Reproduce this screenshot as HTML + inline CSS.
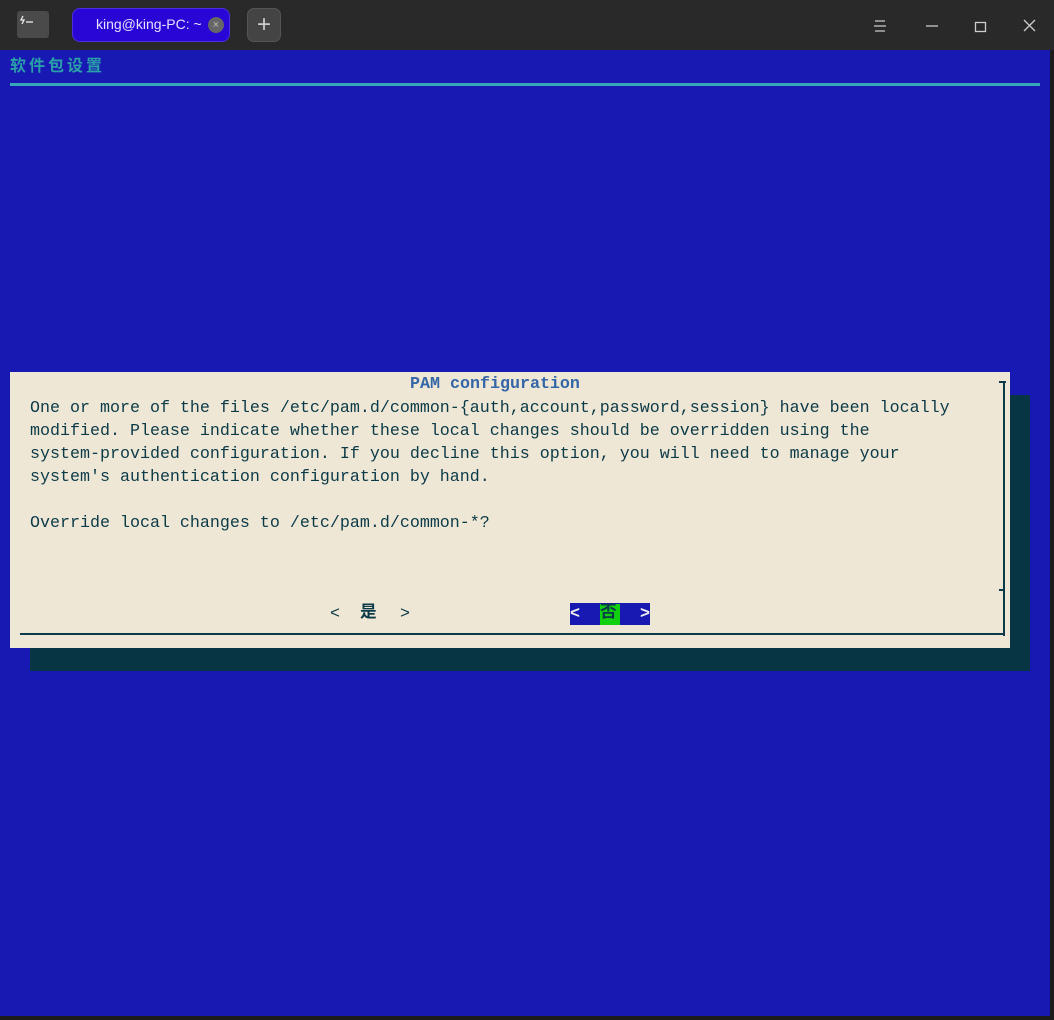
<!DOCTYPE html>
<html><head><meta charset="utf-8"><style>
*{margin:0;padding:0;box-sizing:border-box}
body{width:1054px;height:1020px;background:#1c1c1c;position:relative;overflow:hidden;font-family:"Liberation Mono","Noto Sans CJK SC",monospace}
.abs{position:absolute}
.t{position:absolute;left:30px;font-size:16.67px;color:#0b3a48;white-space:pre;line-height:20px}
</style></head><body>
<div class="abs" style="left:0;top:0;width:1054px;height:50px;background:#292929"></div>
<div class="abs" style="left:17px;top:11px;width:32px;height:27px;background:#4a4a4a;border-radius:3px"></div>
<svg class="abs" style="left:17px;top:11px" width="32" height="27" fill="none" stroke="#eee" stroke-width="1.3"><path d="M6 5l-2 4h3l-2 4"/><path d="M9 11h7"/></svg>
<div class="abs" style="left:72px;top:8px;width:158px;height:34px;background:#2a06d6;border:1px solid #4a30e0;border-radius:8px"></div>
<div class="abs" style="left:96px;top:16px;color:#e8e0ff;font-family:'Liberation Sans',sans-serif;font-size:14px">king@king-PC: ~</div>
<div class="abs" style="left:208px;top:17px;width:16px;height:16px;border-radius:50%;background:#666;color:#bbb;font-size:11px;text-align:center;line-height:16px;font-family:'Liberation Sans',sans-serif">×</div>
<div class="abs" style="left:247px;top:8px;width:34px;height:34px;background:#444;border:1px solid #555;border-radius:7px;color:#ccc;font-size:24px;text-align:center;line-height:31px;font-family:'Liberation Sans',sans-serif">+</div>
<svg class="abs" style="left:860px;top:10px" width="190" height="32" stroke="#ccc" stroke-width="1.3" fill="none">
<path d="M15 11h10M14 16h12M15 21h10"/>
<path d="M66 16h12"/>
<rect x="115.5" y="12.5" width="10" height="9"/>
<path d="M164 10l11 11M175 10l-11 11"/>
</svg>
<div class="abs" style="left:0;top:50px;width:1050px;height:966px;background:#1818b2"></div>
<div class="abs" style="left:10px;top:52px;font-family:'Noto Sans CJK SC',sans-serif;font-weight:bold;font-size:16px;color:#2aa0a8;letter-spacing:3px">软件包设置</div>
<div class="abs" style="left:10px;top:83px;width:1030px;height:3px;background:#38a8b8"></div>
<div class="abs" style="left:30px;top:395px;width:1000px;height:276px;background:#083543"></div>
<div class="abs" style="left:10px;top:372px;width:1000px;height:276px;background:#efe7d5"></div>
<div class="abs" style="left:999px;top:381px;width:7px;height:2px;background:#0b3a48"></div>
<div class="abs" style="left:1003px;top:381px;width:2px;height:255px;background:#0b3a48"></div>
<div class="abs" style="left:999px;top:589px;width:5px;height:2px;background:#0b3a48"></div>
<div class="abs" style="left:20px;top:633px;width:985px;height:2px;background:#0b3a48"></div>
<div class="t" style="left:410px;top:375px;color:#3466a8;font-weight:bold">PAM configuration</div>
<div class="t" style="top:399px">One or more of the files /etc/pam.d/common-{auth,account,password,session} have been locally</div>
<div class="t" style="top:422px">modified. Please indicate whether these local changes should be overridden using the</div>
<div class="t" style="top:445px">system-provided configuration. If you decline this option, you will need to manage your</div>
<div class="t" style="top:468px">system's authentication configuration by hand.</div>
<div class="t" style="top:514px">Override local changes to /etc/pam.d/common-*?</div>
<div class="t" style="left:330px;top:605px">&lt;</div>
<div class="t" style="left:360px;top:604px;font-weight:bold">是</div>
<div class="t" style="left:400px;top:605px">&gt;</div>
<div class="abs" style="left:570px;top:603px;width:80px;height:22px;background:#1818b2"></div>
<div class="abs" style="left:600px;top:604px;width:20px;height:21px;background:#10d010"></div>
<div class="t" style="left:570px;top:605px;color:#f0f0f0;font-weight:bold">&lt;</div>
<div class="t" style="left:600px;top:604px;font-weight:bold;color:#0b3a48">否</div>
<div class="t" style="left:640px;top:605px;color:#f0f0f0;font-weight:bold">&gt;</div>
</body></html>
